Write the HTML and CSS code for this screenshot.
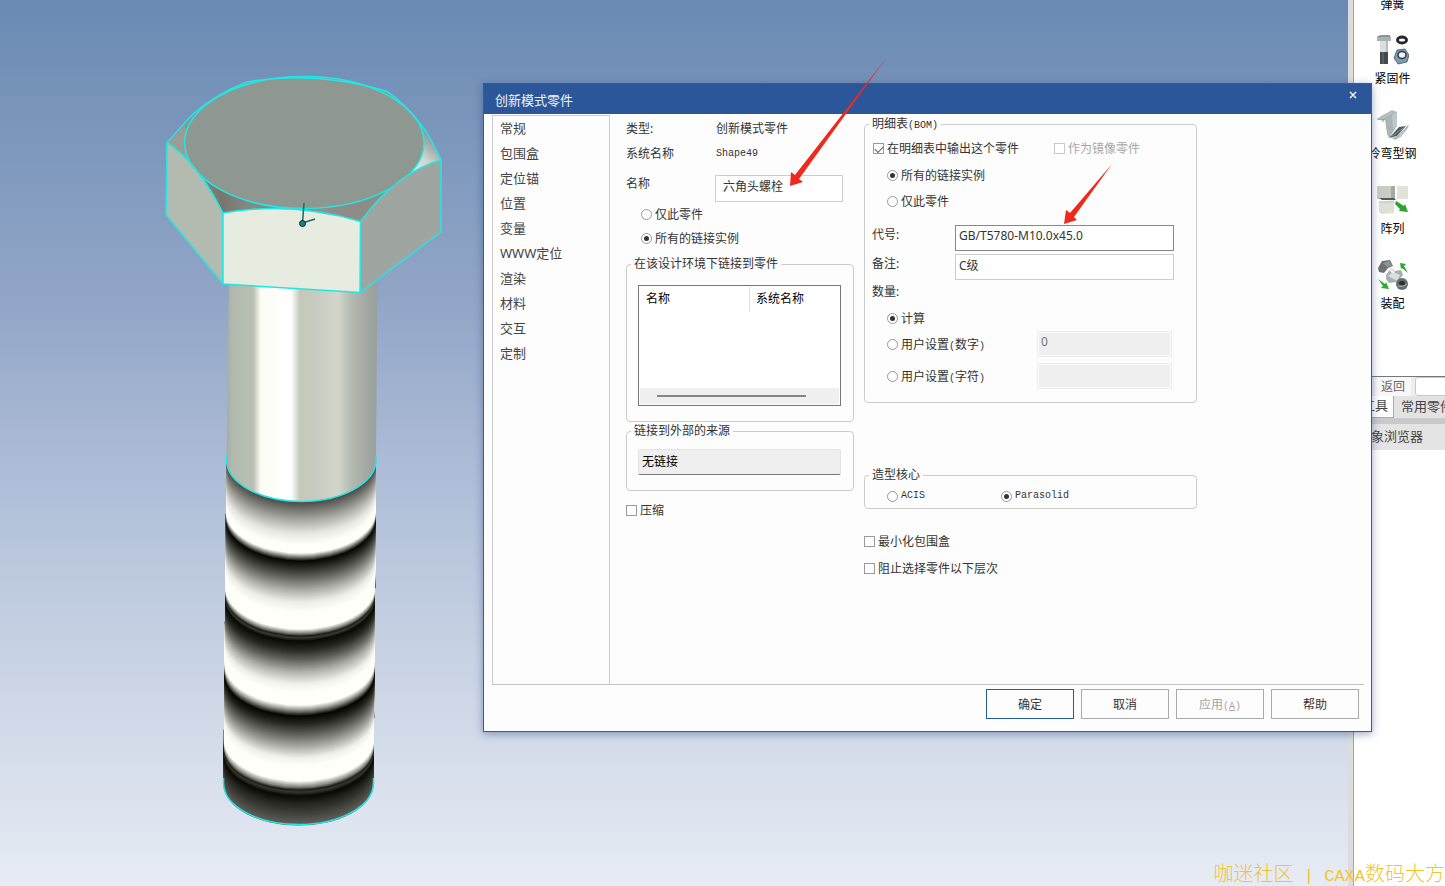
FILE: index.html
```html
<!DOCTYPE html>
<html lang="zh-CN">
<head>
<meta charset="utf-8">
<title>创新模式零件</title>
<link rel="stylesheet" href="styles.css">
</head>
<body>
<div class="app">
  <main class="scene">
    <svg class="bolt" viewBox="150 60 310 780" aria-label="六角头螺栓">
      <defs>
        <linearGradient id="shank" x1="226" x2="377" y1="0" y2="0" gradientUnits="userSpaceOnUse">
          <stop offset="0" stop-color="#a3aca4"/><stop offset=".04" stop-color="#b1b9ae"/>
          <stop offset=".18" stop-color="#babfb2"/><stop offset=".23" stop-color="#fbfcf4"/>
          <stop offset=".43" stop-color="#ffffff"/><stop offset=".49" stop-color="#c3c8ba"/>
          <stop offset=".6" stop-color="#c8ccc0"/><stop offset=".74" stop-color="#d2d6cb"/>
          <stop offset=".84" stop-color="#b2b8ae"/><stop offset=".92" stop-color="#a5aba4"/>
          <stop offset="1" stop-color="#98a09b"/>
        </linearGradient>
        <linearGradient id="cornerL" x1="180" x2="250" y1="0" y2="0" gradientUnits="userSpaceOnUse">
          <stop offset="0" stop-color="#8f978e"/><stop offset=".6" stop-color="#77766e"/><stop offset="1" stop-color="#858a82"/>
        </linearGradient>
        <linearGradient id="cornerR" x1="412" x2="438" y1="172" y2="145" gradientUnits="userSpaceOnUse">
          <stop offset="0" stop-color="#e6eae2"/><stop offset=".5" stop-color="#cdd3cf"/><stop offset="1" stop-color="#939b96"/>
        </linearGradient>
      </defs>
      <g id="thread"></g>
      <path d="M229 270H377.500L376 460A74 41 0 0 1 226.500 460Z" fill="url(#shank)"/>
      <path class="edge" d="M226.500 456V460A74 41 0 0 0 376 460V456M223.500 778V783A74 41 0 0 0 373.500 783V778" fill="none"/>
      <path d="M167 142.500C185 123 212 96 247 82Q315 70 386 91Q415 111 441 160L360 222Q291 201 223 213Z" fill="#8d948e"/>
      <path d="M167 143L185 125V142L200 176Z" fill="#9b9c96"/>
      <path d="M196 170L223 213Q255 207 282 209Q220 200 196 170Z" fill="url(#cornerL)"/>
      <path d="M441 160Q434 143 420 122Q430 155 408 174Z" fill="url(#cornerR)"/>
      <path d="M360 222L391 189Q355 205 320 208Z" fill="#8e8c85"/>
      <ellipse class="edge" cx="304.300" cy="142.500" rx="119.700" ry="66" fill="#8f9890"/>
      <path class="edge" d="M167 142.500Q198 163 223 213V284L166 215Z" fill="#b3bab0"/>
      <path class="edge" d="M360.500 221.500Q396 173 441 160V232L360 292.500Z" fill="#9fa6a1"/>
      <path class="edge" d="M223 213Q291 201 360.500 221.500L360 292.500L223 284Z" fill="#e6ecdf"/>
      <path class="edge" d="M167 142.500L193 114Q216 94 247 82Q315 70 386 91Q404 102 425 130Q433 143 441 160M386 91L378 89" fill="none"/>
      <path d="M302.500 223L304 203M302.500 223L315 219" stroke="#166a6a" stroke-width="1.500" fill="none"/>
      <circle cx="302.500" cy="223.500" r="3" fill="#178080" stroke="#062c30"/>
    </svg>
  </main>

  <div class="splitter"></div>

  <aside class="panel">
    <div class="catalog">
      <div class="tile">
        <svg class="pic" viewBox="0 0 32 32"><path d="M6 4l20 6M6 12l20 6M6 20l20 6" stroke="#889" fill="none"/></svg>
        <span>弹簧</span>
      </div>
      <div class="tile">
        <svg class="pic" viewBox="0 0 32 32">
          <path d="M0 3l3-2h9l2 2v4H0z" fill="#a9b1b1"/><path d="M1 3l3-1h9" stroke="#6f7c80" fill="none"/>
          <path d="M3 7h8v12H3z" fill="#d9dfdd"/><path d="M9 7h2v12H9z" fill="#b6bebd"/>
          <path d="M3 18h8v12H3z" fill="#43494d"/><path d="M6 18v12" stroke="#777"/>
          <ellipse cx="25" cy="6" rx="4.500" ry="3" fill="none" stroke="#23282b" stroke-width="3"/>
          <path d="M20 16l8-1 4 6-2 7-9 2-4-6z" fill="#7e9cb0" stroke="#344652" stroke-width=".7"/>
          <ellipse cx="25" cy="21" rx="4" ry="3.500" fill="#f1f5f7" stroke="#2b3a44" stroke-width="1.500"/>
        </svg>
        <span>紧固件</span>
      </div>
      <div class="tile">
        <svg class="pic" viewBox="0 0 32 32">
          <path d="M0 10L4 7L15 1L20 3L8 10L6 14L5 11Z" fill="#b4c0be"/>
          <path d="M0 10L5 11L8 10L20 3" stroke="#7f8e8e" stroke-width=".7" fill="none"/>
          <path d="M8 10L20 3L20 17L12 29L10 25Z" fill="#a9b6b5"/>
          <path d="M15 6L20 3V17L16 20Z" fill="#bccac7"/>
          <path d="M12 29L22 18L29 17L20 27Z" fill="#4f5e60"/>
          <path d="M14 29L23 26L32 15L31 19L24 28L18 31Z" fill="#b9c6c3"/>
          <path d="M15 27L28 18M18 30L31 17" stroke="#8c9a9a" stroke-width=".8"/>
        </svg>
        <span>冷弯型钢</span>
      </div>
      <div class="tile">
        <svg class="pic" viewBox="0 0 32 32">
          <path d="M0 2h18v13H0z" fill="#c9ccc5"/><path d="M14 2h4v13h-4z" fill="#a4aaa2"/>
          <path d="M20 2h11v13H20z" fill="#e1e3d8"/><path d="M2 14l3 2h14l-2-2z" fill="#555a56"/>
          <path d="M2 18l15-2v13l-12 1-3-2z" fill="#dde0d5"/><path d="M2 18h15" stroke="#bbc0b5"/>
          <path d="M19 17l8 5 1-2 3 8-9-1 1-2-5-5z" fill="#29a52e"/>
        </svg>
        <span>阵列</span>
      </div>
      <div class="tile">
        <svg class="pic" viewBox="0 0 32 32">
          <path d="M1 9l4-7 8-1 3 6-5 2-4 5-5-1z" fill="#6b7376"/><path d="M6 4l6-2 3 5-5 1z" fill="#8b9496"/>
          <path d="M9 16l5-7 4 3 6-1 2 5-6 7-8 1-3-4z" fill="#a5afb2"/>
          <path d="M11 17l9 5 3-6-7-3z" fill="#d9dfdf"/><path d="M13 10l4 4" stroke="#eee" stroke-width="3"/>
          <circle cx="25" cy="25" r="6" fill="#656c70"/><ellipse cx="25" cy="24" rx="3" ry="2" fill="#2b2d2e"/>
          <path d="M21 27q5 2 9-2" stroke="#a5acae" fill="none"/>
          <path d="M23 4l6 1-2 2 4 7-6-5-1 1z" fill="#28ad2c"/><path d="M1 20l7 5 1-2 3 7-8-1 2-2z" fill="#28ad2c"/>
        </svg>
        <span>装配</span>
      </div>
    </div>
    <div class="browser">
      <div class="browser-bar">
        <button class="back" type="button">返回</button>
        <input class="address" type="text" aria-label="地址">
      </div>
      <div class="tabs">
        <button class="tab tab-on" type="button">工具</button>
        <button class="tab" type="button">常用零件</button>
      </div>
      <div class="browser-title">对象浏览器</div>
    </div>
  </aside>

  <section class="dialog" role="dialog" aria-labelledby="dlg-title">
    <header class="titlebar">
      <h1 id="dlg-title">创新模式零件</h1>
      <button class="close" type="button" aria-label="关闭"><svg viewBox="0 0 8 8"><path d="M1 1l6 6M7 1L1 7"/></svg></button>
    </header>
    <div class="content">
      <nav class="nav">
        <a href="#">常规</a><a href="#">包围盒</a><a href="#">定位锚</a><a href="#">位置</a><a href="#">变量</a>
        <a href="#">WWW定位</a><a href="#">渲染</a><a href="#">材料</a><a href="#">交互</a><a href="#">定制</a>
      </nav>

      <form class="col-left">
        <dl class="facts">
          <dt>类型:</dt><dd>创新模式零件</dd>
          <dt>系统名称</dt><dd class="mono">Shape49</dd>
        </dl>
        <div class="name-row">
          <label for="name">名称</label>
          <input id="name" class="text name-box" type="text" value="六角头螺栓">
        </div>
        <div class="indent">
          <label class="opt"><input type="radio" name="scope">仅此零件</label>
          <label class="opt"><input type="radio" name="scope" checked>所有的链接实例</label>
        </div>
        <fieldset class="group links">
          <legend>在该设计环境下链接到零件</legend>
          <div class="list">
            <table>
              <thead><tr><th class="c1">名称</th><th>系统名称</th></tr></thead>
            </table>
            <div class="scroll"><div class="thumb"></div></div>
          </div>
        </fieldset>
        <fieldset class="group source">
          <legend>链接到外部的来源</legend>
          <input class="readonly" type="text" value="无链接" readonly aria-label="链接到外部的来源">
        </fieldset>
        <label class="opt compress"><input type="checkbox">压缩</label>
      </form>

      <form class="col-right">
        <fieldset class="group bom">
          <legend>明细表<span class="mono">(BOM)</span></legend>
          <div class="pair">
            <label class="opt"><input type="checkbox" checked>在明细表中输出这个零件</label>
            <label class="opt off"><input type="checkbox" disabled>作为镜像零件</label>
          </div>
          <div class="indent bom-scope">
            <label class="opt"><input type="radio" name="bom" checked>所有的链接实例</label>
            <label class="opt"><input type="radio" name="bom">仅此零件</label>
          </div>
          <div class="fields">
            <label for="code">代号:</label><input id="code" class="text active" type="text" value="GB/T5780-M10.0x45.0">
            <label for="note">备注:</label><input id="note" class="text" type="text" value="C级">
          </div>
          <div class="caption">数量:</div>
          <div class="qty">
            <label class="opt calc"><input type="radio" name="qty" checked>计算</label>
            <label class="opt"><input type="radio" name="qty"><span>用户设置<span class="mono">(</span>数字<span class="mono">)</span></span></label>
            <input class="text disabled" type="text" value="0" disabled aria-label="数字">
            <label class="opt"><input type="radio" name="qty"><span>用户设置<span class="mono">(</span>字符<span class="mono">)</span></span></label>
            <input class="text disabled" type="text" disabled aria-label="字符">
          </div>
        </fieldset>
        <fieldset class="group kernel">
          <legend>造型核心</legend>
          <div class="kernels">
            <label class="opt"><input type="radio" name="kernel"><span class="mono">ACIS</span></label>
            <label class="opt"><input type="radio" name="kernel" checked><span class="mono">Parasolid</span></label>
          </div>
        </fieldset>
        <div class="extras">
          <label class="opt"><input type="checkbox">最小化包围盒</label>
          <label class="opt"><input type="checkbox">阻止选择零件以下层次</label>
        </div>
      </form>
    </div>
    <footer class="actions">
      <button class="btn primary" type="button">确定</button>
      <button class="btn" type="button">取消</button>
      <button class="btn" type="button" disabled>应用<span class="mono">(<u>A</u>)</span></button>
      <button class="btn" type="button">帮助</button>
    </footer>
  </section>

  <svg class="arrows" viewBox="780 50 340 180" aria-hidden="true">
    <path d="M790 186L791 172L795 175L887 57L799 179L803 182Z"/>
    <path d="M1064 224L1066 210L1070 213L1112 164L1074 217L1077 220Z"/>
  </svg>
  <div class="watermark">咖迷社区<span class="latin"> | CAXA</span>数码大方</div>
</div>
<script src="bolt.js"></script>
</body>
</html>
```
FILE: styles.css
```css
* { box-sizing: border-box; }
body {
  margin: 0;
  font-family: "Noto Sans", "Noto Sans CJK SC", sans-serif;
  font-size: 12px;
  color: #333;
}
button, input { font: inherit; color: inherit; }

.app { position: relative; display: flex; min-height: 100vh; overflow: hidden; }

.scene {
  flex: 1;
  padding: 60px 0 0 150px;
  background: linear-gradient(#6a8ab3, #94a8c8 36%, #a9b9d5 50%, #c6d1e3 73%, #e7ecf4);
}
.bolt { display: block; width: 310px; height: 780px; }
.edge { stroke: #22e6e6; stroke-width: 1.5; stroke-linejoin: round; }

.splitter { width: 5px; background: #dcdcdc; }
.panel { width: 92px; background: #fff; overflow: hidden; border-left: 1px solid #a6a6a6; }

.catalog { width: 77px; height: 376px; overflow: hidden; display: flex; flex-direction: column; }
.tile {
  flex: none;
  height: 75px;
  display: flex;
  flex-direction: column;
  align-items: center;
  gap: 4px;
  line-height: 18px;
  color: #000;
  white-space: nowrap;
}
.tile:first-child { height: 34px; justify-content: flex-end; padding-bottom: 20px; }
.pic { flex: none; width: 32px; height: 32px; }

.browser { border-top: 1px solid #777; color: #444; }
.browser-bar { display: flex; gap: 4px; height: 19px; padding-left: 21px; background: #eee; }
.back { flex: none; width: 36px; padding: 0; border: 0; border-radius: 3px; background: #f8f8f8; color: #666; line-height: 18px; }
.address { width: 60px; flex: none; border: 1px solid #c8c8c8; border-radius: 3px; background: #fff; }
.tabs { display: flex; height: 23px; background: #e3e3e3; border-bottom: 1px solid #ccc; font-size: 13px; }
.tab { flex: none; padding: 0 7px 3px; border: 0; background: none; line-height: 18px; white-space: nowrap; }
.tab-on { width: 40px; padding: 0 5px 3px 8px; background: #fff; border: solid #aaa; border-width: 0 1px 1px 0; }
.browser-title {
  padding: 0 0 2px 4px;
  border-top: 5px solid #c9c9c9;
  background: #e4e4e4;
  font-size: 13px;
  line-height: 24px;
}

.dialog {
  position: absolute;
  top: 83px;
  left: 483px;
  right: 73px;
  background: #fdfdfd;
  border: 1px solid #2266a0;
  box-shadow: 0 2px 8px rgba(30, 60, 120, .45);
}
.titlebar {
  display: flex;
  justify-content: space-between;
  align-items: flex-start;
  height: 30px;
  padding: 0 13px 0 11px;
  background: #2b579a;
  color: #f0f4fa;
}
.titlebar h1 { margin: 0; padding-top: 3px; font-size: 13px; font-weight: 400; line-height: 26px; }
.close { width: 10px; height: 22px; padding: 0; border: 0; background: none; }
.close svg { width: 8px; height: 8px; display: block; margin: auto; stroke: #fff; stroke-width: 1.4; }

.content {
  display: flex;
  gap: 16px;
  margin: 0 7px 0 8px;
  padding-top: 1px;
  border-bottom: 1px solid #c3c3c3;
}
.nav {
  flex: none;
  width: 118px;
  min-height: 569px;
  padding: 0 7px;
  border: 1px solid #ccc;
  border-bottom: 0;
}
.nav a { display: block; color: #444; font-size: 13px; line-height: 25px; text-decoration: none; }

.mono { font-family: "Liberation Mono", monospace; font-size: 10px; }
span.mono { line-height: 1; }

.col-left { width: 228px; padding-top: 1px; }
.facts { display: grid; grid-template-columns: 90px 1fr; margin: 0; line-height: 25px; }
.facts dd { margin: 0; }
.name-row { display: grid; grid-template-columns: 89px 128px; margin-top: 9px; line-height: 18px; }
.indent { padding-left: 15px; }

.opt { display: flex; align-items: center; gap: 3px; height: 24px; white-space: nowrap; }
.opt input {
  appearance: none;
  flex: none;
  display: grid;
  place-items: center;
  width: 11px;
  height: 11px;
  margin: 0;
  border: 1px solid #999;
  background: #fff;
}
.opt input[type="radio"] { border-radius: 50%; }
.opt input[type="radio"]:checked::after { content: ""; width: 5px; height: 5px; border-radius: 50%; background: #333; }
.opt input[type="checkbox"]:checked::after {
  content: "";
  width: 7px;
  height: 4px;
  border: solid #555;
  border-width: 0 0 1px 1px;
  transform: rotate(-45deg);
}
.opt input:disabled { border-color: #c8c8c8; }
.off { color: #a8a8a8; }

.text { width: 100%; height: 26px; padding: 0 3px 5px; border: 1px solid #ccc; border-radius: 0; background: #fff; outline: 0; }
.name-box { height: 27px; padding-left: 7px; }
.active { border-color: #888; }
.disabled { border-color: #ececec; background: #efefef; box-shadow: inset 0 0 0 1px #fafafa; color: #777; }

.group { min-width: 0; margin: 0; padding: 0; border: 1px solid #ccc; border-radius: 4px; }
.group legend { padding: 0 3px; line-height: 18px; }
.links { margin-top: 5px; padding: 12px 12px 15px 11px; }
.source { padding: 9px 12px 15px 11px; }
.links legend, .source legend { margin-left: -7px; }
.list { display: flex; flex-direction: column; height: 121px; padding: 1px; border: 1px solid #777; background: #fff; color: #000; }
.list table { width: 100%; border-collapse: collapse; table-layout: fixed; }
.list th { height: 24px; padding: 0 6px; font-weight: 400; text-align: left; line-height: 22px; }
.list .c1 { width: 55%; border-right: 1px solid #ddd; }
.scroll { margin-top: auto; height: 16px; padding: 7px 33px 0 17px; background: #f0f0f0; }
.thumb { height: 2px; background: #858585; }
.readonly { display: block; width: 100%; height: 26px; padding: 0 3px 2px; border: 1px solid #e4e4e4; border-bottom-color: #777; border-radius: 2px; background: #efefef; color: #000; outline: 0; }
.compress { margin-top: 7px; }

.col-right { width: 333px; margin-left: -6px; }
.bom { padding: 3px 22px 13px 7px; }
.bom legend { margin-left: -3px; }
.pair { display: grid; grid-template-columns: 181px 1fr; padding-left: 1px; }
.bom-scope { display: grid; gap: 2px; margin-top: 3px; }
.fields { display: grid; grid-template-columns: 83px 1fr; gap: 3px 0; margin-top: 12px; line-height: 20px; }
.caption { line-height: 24px; }
.qty { display: grid; grid-template-columns: 150px 135px; row-gap: 6px; align-items: center; margin-top: 2px; padding-left: 15px; }
.calc { grid-column: 1 / -1; margin-bottom: -5px; }
.kernel { margin-top: 63px; padding: 0 22px; }
.kernel legend { margin-left: -18px; }
.kernels { display: grid; grid-template-columns: 114px 1fr; }
.extras { display: grid; gap: 3px; margin-top: 20px; }

.actions { display: flex; justify-content: flex-end; gap: 7px; padding: 4px 12px 12px; }
.btn { width: 88px; height: 30px; padding: 0; border: 1px solid #aaa; border-radius: 0; background: #fdfdfd; }
.primary { border-color: #22608f; }
.btn:disabled { color: #a5a5a5; }

.arrows { position: absolute; top: 50px; left: 780px; width: 340px; height: 180px; pointer-events: none; fill: #ee2a1c; }
.watermark {
  position: absolute;
  right: 0;
  bottom: 0;
  color: #f2c42e;
  font-size: 20px;
  font-weight: 300;
  line-height: 24px;
  white-space: nowrap;
}
.latin { font-family: "Liberation Mono", monospace; font-size: 17px; line-height: 1; white-space: pre; }
```
FILE: bolt.js
```javascript
// Shading of the threaded part, as [y at the front of the cylinder, grey level].
const stops = [
  [501, 70], [510, 118], [522, 178], [534, 232], [545, 255], [553, 255], [557, 130], [561, 8],
  [567, 38], [578, 100], [590, 172], [602, 236], [612, 255], [629, 255], [634, 110], [636, 30], [638, 58], [641, 10],
  [650, 40], [660, 98], [672, 178], [684, 240], [692, 255], [705, 255], [710, 150], [716, 6],
  [724, 38], [735, 100], [747, 172], [758, 240], [766, 255], [781, 255], [787, 130], [790, 30], [792, 55], [796, 10],
  [803, 35], [825, 98]
];

function level(y) {
  let i = 1;
  while (stops[i][0] < y) i++;
  const [y0, v0] = stops[i - 1];
  const [y1, v1] = stops[i];
  return Math.round(v0 + (v1 - v0) * (y - y0) / (y1 - y0));
}

const group = document.getElementById("thread");
for (let y = 825; y >= 501; y--) {
  const drift = (y - 501) / 324;
  const left = 226.5 - 3 * drift;
  const right = 376 - 2.5 * drift;
  const v = level(y);
  const path = document.createElementNS("http://www.w3.org/2000/svg", "path");
  path.setAttribute("d", `M226.5 459L${left} ${y - 41}A74 41 0 0 0 ${right} ${y - 41}L376 459Z`);
  path.setAttribute("fill", `rgb(${v},${v},${Math.max(0, v - 6)})`);
  group.appendChild(path);
}
```
